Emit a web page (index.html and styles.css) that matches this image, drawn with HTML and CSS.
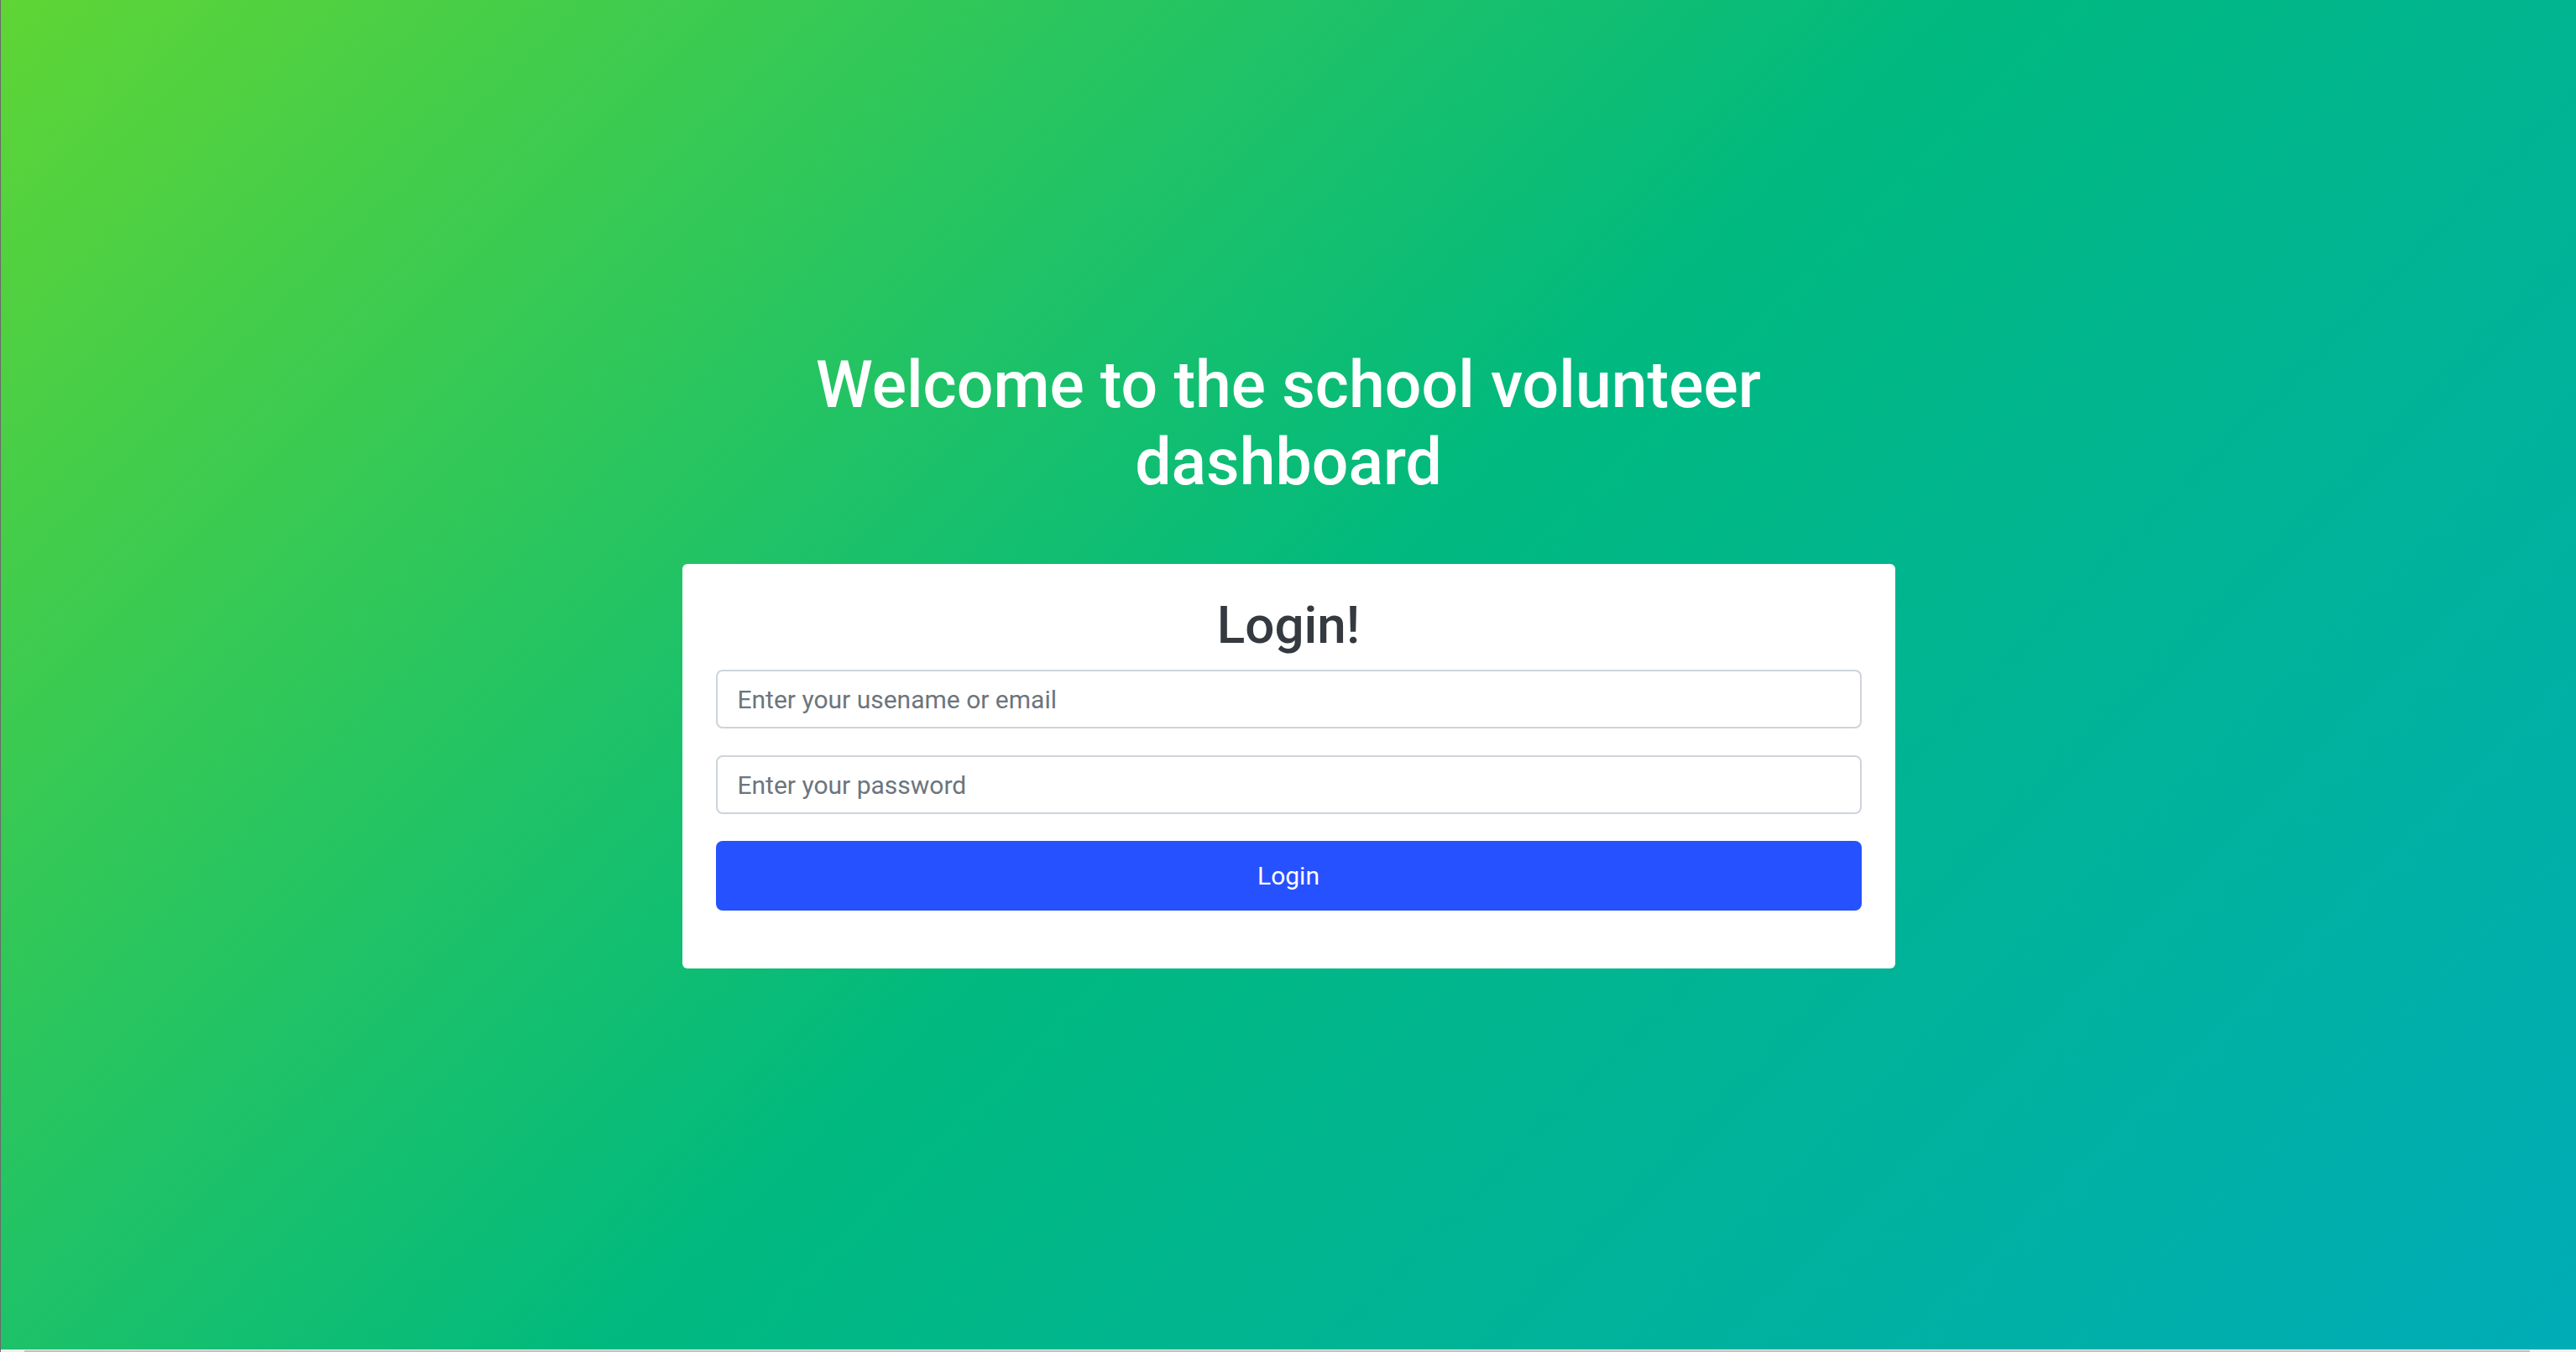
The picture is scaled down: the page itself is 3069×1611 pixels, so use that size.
FILE: index.html
```html
<!DOCTYPE html>
<html lang="en">
<head>
<meta charset="utf-8">
<title>School Volunteer Dashboard - Login</title>
<link rel="stylesheet" href="styles.css">
</head>
<body>
<main class="page">
  <h1 class="welcome">Welcome to the school volunteer dashboard</h1>
  <section class="card">
    <h2 class="card-title">Login!</h2>
    <form class="login-form">
      <input class="field" type="text" placeholder="Enter your usename or email">
      <input class="field" type="password" placeholder="Enter your password">
      <button class="btn" type="button">Login</button>
    </form>
  </section>
</main>
<div class="hscroll"><div class="hscroll-thumb"></div></div>
</body>
</html>
```
FILE: styles.css
```css
html, body {
  margin: 0;
  padding: 0;
  height: 100%;
}
body {
  font-family: Roboto, "Liberation Sans", Arial, sans-serif;
  background: linear-gradient(135deg, #5fd535 0%, #00b97f 50%, #00acb7 100%);
  border-left: 1px solid #6a6a6a;
  box-sizing: border-box;
  overflow: hidden;
}
.page {
  height: 1611px;
  display: flex;
  flex-direction: column;
  align-items: center;
  justify-content: center;
}
.welcome {
  margin: 0 0 75px 0;
  max-width: 1250px;
  text-align: center;
  color: #ffffff;
  font-size: 77px;
  font-weight: 500;
  line-height: 92px;
}
.card {
  width: 1445px;
  box-sizing: border-box;
  background: #ffffff;
  border-radius: 6px;
  padding: 36px 40px 69px;
  margin-bottom: 44px;
}
.card-title {
  margin: 0 0 16px 0;
  text-align: center;
  color: #343a40;
  font-size: 62px;
  font-weight: 500;
  line-height: 74px;
}
.login-form {
  display: flex;
  flex-direction: column;
  gap: 32px;
}
.field {
  height: 70px;
  box-sizing: border-box;
  border: 2px solid #ced4da;
  border-radius: 8px;
  padding: 0 24px;
  font-family: Roboto, "Liberation Sans", Arial, sans-serif;
  font-size: 30px;
  color: #495057;
  background: #fff;
  outline: none;
}
.field::placeholder {
  color: #6c757d;
  opacity: 1;
}
.btn {
  height: 83px;
  border: none;
  border-radius: 8px;
  background: #2651ff;
  color: #ffffff;
  font-family: Roboto, "Liberation Sans", Arial, sans-serif;
  font-size: 30px;
  cursor: pointer;
}
.hscroll {
  position: fixed;
  left: 1px;
  right: 0;
  bottom: 0;
  height: 3px;
  background: #f1f1f1;
}
.hscroll-thumb {
  margin-left: 28px;
  width: 2985px;
  height: 2px;
  margin-top: 1px;
  background: #c1c1c1;
}
```
